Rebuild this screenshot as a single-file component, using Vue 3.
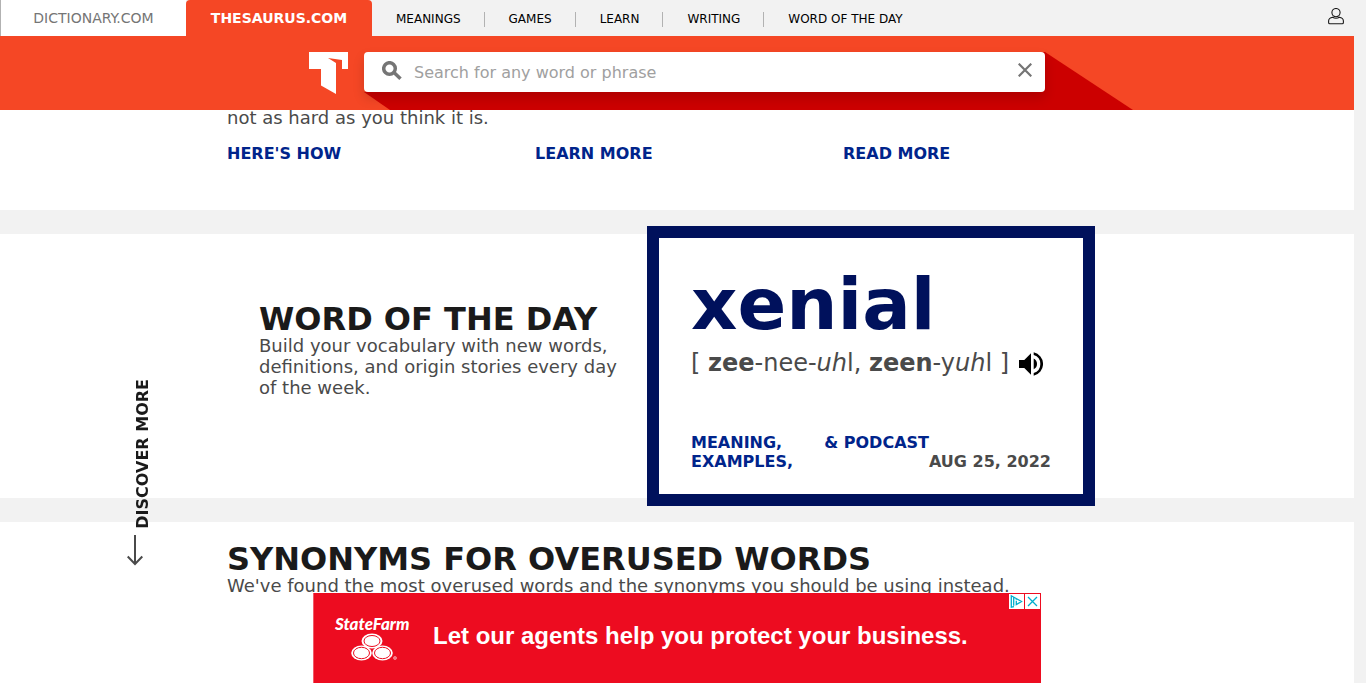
<script setup>
import { ref } from 'vue'

const query = ref('')
const links = ['MEANINGS', 'GAMES', 'LEARN', 'WRITING', 'WORD OF THE DAY']
const articles = [
  { text: 'not as hard as you think it is.', action: "HERE'S HOW" },
  { text: '', action: 'LEARN MORE' },
  { text: '', action: 'READ MORE' }
]
</script>

<template>
  <div class="page">
    <header class="site-header">
      <nav class="topnav">
        <a href="#" class="tab dictionary">DICTIONARY.COM</a>
        <a href="#" class="tab thesaurus">THESAURUS.COM</a>
        <ul class="menu">
          <li v-for="link in links" :key="link"><a href="#">{{ link }}</a></li>
        </ul>
        <button class="account" type="button" aria-label="Account">
          <svg width="16" height="17" viewBox="0 0 16 17" fill="none" stroke="#1a1a1a" stroke-width="1.1">
            <circle cx="8" cy="4.6" r="4.1" />
            <path d="M4.8 9.2C2.3 9.600.6 10.900.6 12.900v1.500c0 .8.4 1.300 1.200 1.300h12.400c.8 0 1.200-.5 1.200-1.300v-1.500c0-2-1.700-3.300-4.200-3.700C9.600 10.500 6.400 10.500 4.800 9.200Z" />
          </svg>
        </button>
      </nav>
      <div class="banner">
        <div class="banner-inner">
          <a href="#" class="logo" aria-label="Thesaurus.com">
            <svg width="39" height="42" viewBox="0 0 39 42">
              <path fill="#fff" d="M0 0H39V17H33V8L19 6L27 11V42L12 33.500V17H0Z" />
            </svg>
          </a>
          <form class="search" @submit.prevent>
            <div class="search-box">
              <button type="submit" class="search-icon" aria-label="Search">
                <svg width="20" height="19" viewBox="0 0 20 19" fill="none" stroke="#757575" stroke-width="3.500">
                  <circle cx="7.500" cy="7.500" r="5.800" />
                  <path d="M12 11.500 18.500 17.700" />
                </svg>
              </button>
              <input v-model="query" type="text" aria-label="Search" placeholder="Search for any word or phrase" />
              <button type="reset" class="clear" aria-label="Clear" @click="query = ''">
                <svg width="14" height="14" viewBox="0 0 14 14" stroke="#757575" stroke-width="2.200">
                  <path d="M.7.7 13.300 13.300M13.300.7.7 13.300" />
                </svg>
              </button>
            </div>
          </form>
        </div>
      </div>
    </header>

    <main>
      <section class="articles">
        <div class="wrap columns">
          <article v-for="item in articles" :key="item.action">
            <p>{{ item.text }}</p>
            <a href="#">{{ item.action }}</a>
          </article>
        </div>
      </section>

      <section class="wotd">
        <div class="wrap wotd-inner">
          <div class="wotd-copy">
            <h2>WORD OF THE DAY</h2>
            <p>Build your vocabulary with new words, definitions, and origin stories every day of the week.</p>
          </div>
          <div class="card">
            <h3>xenial</h3>
            <div class="pron">
              <span>[ <b>zee</b>-nee-<i>uh</i>l, <b>zeen</b>-y<i>uh</i>l ]</span>
              <button type="button" aria-label="Play pronunciation">
                <svg width="24" height="24" viewBox="0 0 24 24">
                  <path d="M0 8v8h5.300L12 22.700V1.300L5.300 8zM18 12a6 6 0 0 0-3.300-5.400v10.700A6 6 0 0 0 18 12zM14.700.3v2.750a9.350 9.350 0 0 1 0 17.900v2.750a12 12 0 0 0 0-23.400z" />
                </svg>
              </button>
            </div>
            <div class="card-foot">
              <a href="#" class="meaning">MEANING, EXAMPLES,</a>
              <a href="#" class="podcast">&amp; PODCAST</a>
              <span class="date">AUG 25, 2022</span>
            </div>
          </div>
        </div>
      </section>

      <section class="synonyms">
        <div class="wrap">
          <h2>SYNONYMS FOR OVERUSED WORDS</h2>
          <p>We've found the most overused words and the synonyms you should be using instead.</p>
        </div>
      </section>
    </main>

    <a href="#" class="discover">
      <span>DISCOVER MORE</span>
      <svg width="16" height="31" viewBox="0 0 16 31" fill="none" stroke="#4a4a4a" stroke-width="2">
        <path d="M8 0V29M.7 21.500 8 29l7.300-7.500" />
      </svg>
    </a>

    <aside class="ad" aria-label="Advertisement">
      <a href="#" class="ad-link">
        <span class="sf">
          <span class="sf-name">StateFarm</span>
          <svg width="48" height="28" viewBox="0 0 48 28">
            <g fill="#fff">
              <ellipse cx="21" cy="8" rx="10.500" ry="7.500" />
              <ellipse cx="10.500" cy="20" rx="10.300" ry="7.600" />
              <ellipse cx="31.500" cy="20" rx="10.300" ry="7.600" />
            </g>
            <g fill="#fff" stroke="#ed0c20" stroke-width="1">
              <ellipse cx="21" cy="8" rx="8" ry="5.500" />
              <ellipse cx="10.500" cy="20" rx="8" ry="5.700" />
              <ellipse cx="31.500" cy="20" rx="8" ry="5.700" />
            </g>
            <circle cx="44" cy="25" r="1.500" fill="#f46d79" stroke="#f9a5ad" stroke-width=".7" />
          </svg>
        </span>
        <span class="ad-text">Let our agents help you protect your business.</span>
      </a>
      <div class="ad-controls">
        <button type="button" aria-label="Ad information">
          <svg width="15" height="15" viewBox="0 0 15 15" fill="none" stroke="#00aecd" stroke-width="1.300">
            <path d="M5 12.600 2.300 13.200V1.800L12.500 7.500 7.300 10.500V6.700M4.700 3.500V11.700M7.300 4.700v1" />
          </svg>
        </button>
        <button type="button" aria-label="Close ad">
          <svg width="15" height="15" viewBox="0 0 15 15" stroke="#00aecd" stroke-width="1.300">
            <path d="M3 3 12 12M12 3 3 12" />
          </svg>
        </button>
      </div>
    </aside>
  </div>
</template>

<style>
body {
  margin: 0;
  background: #f2f2f2;
}
</style>

<style scoped>
.page {
  min-height: 100vh;
  box-sizing: border-box;
  padding-right: 12px;
  display: flex;
  flex-direction: column;
  font-family: "DejaVu Sans", sans-serif;
  font-size: 18px;
  line-height: 21px;
  color: #4a4a4a;
}
a {
  text-decoration: none;
  color: #00248b;
}
button {
  border: 0;
  padding: 0;
  background: none;
  display: flex;
  cursor: pointer;
}
svg {
  display: block;
}
h2, h3, p {
  margin: 0;
}
h2 {
  font-size: 32px;
  line-height: 32px;
  color: #1a1a1a;
}
.site-header {
  position: sticky;
  top: 0;
  z-index: 2;
}
.topnav {
  display: flex;
  height: 36px;
  background: #f2f2f2;
}
.tab {
  box-sizing: border-box;
  width: 186px;
  font-size: 14px;
  line-height: 36px;
  text-align: center;
}
.dictionary {
  background: #fff;
  border-left: 1px solid #b2b2b2;
  color: #757575;
}
.thesaurus {
  background: #f54725;
  border-radius: 4px 4px 0 0;
  color: #fff;
  font-weight: bold;
}
.menu {
  display: flex;
  align-items: center;
  margin: 0;
  padding: 2px 0 0;
  list-style: none;
}
.menu li {
  padding: 0 23px 0 24px;
  font-size: 12px;
  line-height: 15px;
  border-right: 1px solid #b2b2b2;
}
.menu li:last-child {
  border: 0;
}
.menu a {
  color: #000;
}
.account {
  margin-left: auto;
  padding: 8px 10px 0 0;
}
.banner {
  height: 74px;
  overflow: hidden;
  background: #f54725;
}
.banner-inner {
  display: flex;
  gap: 16px;
  max-width: 736px;
  margin: 0 auto;
  padding-top: 16px;
}
.search {
  position: relative;
  flex: 1;
}
.search::before {
  content: "";
  position: absolute;
  inset: 0 -88px -16px 0;
  background: #c00;
  clip-path: polygon(calc(100% - 88px) 0, 100% 100%, 26px 100%, 0 40px);
}
.search-box {
  position: relative;
  display: flex;
  align-items: center;
  height: 40px;
  box-sizing: border-box;
  padding: 0 13px 0 18px;
  background: #fff;
  border-radius: 4px;
  box-shadow: 0 6px 12px rgba(0, 0, 0, 0.15);
}
.search-icon {
  margin-right: 12px;
}
.search-box input {
  flex: 1;
  min-width: 0;
  padding: 2px 0 0;
  border: 0;
  outline: 0;
  font: 16px/20px "DejaVu Sans", sans-serif;
  color: #4a4a4a;
  background: none;
}
.search-box input::placeholder {
  color: #a0a0a0;
}
.search-box button {
  padding-bottom: 4px;
}
main {
  flex: 1;
  display: flex;
  flex-direction: column;
  gap: 24px;
  margin-top: -3px;
}
section {
  background: #fff;
}
.wrap {
  max-width: 900px;
  margin: 0 auto;
  box-sizing: border-box;
}
.columns {
  display: grid;
  grid-template-columns: repeat(3, 1fr);
  gap: 24px;
  padding-bottom: 47px;
}
.columns p {
  min-height: 21px;
  margin-bottom: 16px;
}
.columns a {
  display: block;
  font-size: 16px;
  line-height: 19px;
  font-weight: bold;
}
.wotd-inner {
  display: flex;
  justify-content: space-between;
  gap: 24px;
  padding: 0 32px;
}
.wotd-copy {
  flex: 1;
  padding-top: 69px;
}
.card {
  box-sizing: border-box;
  width: 448px;
  height: 280px;
  margin: -8px 0;
  padding: 24px 32px 23px;
  display: flex;
  flex-direction: column;
  background: #fff;
  border: 12px solid #00115c;
}
.card h3 {
  font-size: 72px;
  line-height: 84px;
  color: #00115c;
}
.pron {
  display: flex;
  align-items: center;
  gap: 10px;
  font-size: 24px;
  line-height: 34px;
  white-space: nowrap;
}
.pron button {
  padding-top: 2px;
}
.card-foot {
  display: flex;
  margin-top: auto;
  font-size: 16px;
  line-height: 19px;
  font-weight: bold;
}
.meaning {
  flex: 1;
}
.podcast, .date {
  white-space: nowrap;
}
.date {
  align-self: flex-end;
}
.synonyms {
  flex: 1;
  padding-top: 21px;
}
.discover {
  position: fixed;
  left: 127px;
  bottom: 117px;
  display: flex;
  flex-direction: column;
  align-items: flex-start;
  gap: 6px;
  color: #1a1a1a;
  font-size: 16px;
  line-height: 20px;
  font-weight: bold;
}
.discover span {
  margin-left: 6px;
  writing-mode: vertical-rl;
  transform: rotate(180deg);
}
.ad {
  position: fixed;
  z-index: 3;
  bottom: 0;
  left: calc(50% - 370px);
  width: 728px;
  height: 90px;
  box-sizing: border-box;
  background: #ed0c20;
  border-left: 1px solid #f25a68;
}
.ad-link {
  display: flex;
  align-items: center;
  gap: 23px;
  height: 100%;
  padding-left: 21px;
  box-sizing: border-box;
  color: #fff;
}
.sf {
  display: flex;
  flex-direction: column;
  width: 75px;
  padding-bottom: 1px;
  font: italic 900 17px/19px Lato, sans-serif;
}
.sf svg {
  margin-left: 16px;
}
.ad-text {
  padding-bottom: 4px;
  font: bold 24px/30px "Liberation Sans", sans-serif;
  white-space: nowrap;
}
.ad-controls {
  position: absolute;
  top: 1px;
  right: 1px;
  display: flex;
  gap: 1px;
}
.ad-controls button {
  background: #fff;
}
</style>
